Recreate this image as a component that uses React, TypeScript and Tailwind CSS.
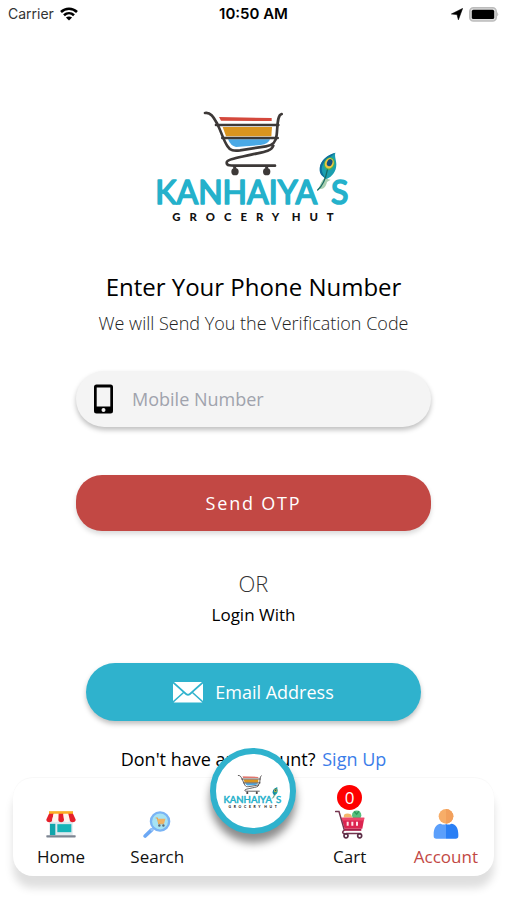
import { useState } from "react";

function Logo({ className }: { className?: string }) {
  return (
    <svg viewBox="0 0 660 390" className={className} role="img" aria-label="Kanhaiya's Grocery Hut">
      {/* Goods in the cart */}
      <path d="M225 51 L383 54 V63 L231 62 Z" fill="#d4483c" />
      <path d="M236 81 L384 81 L382 109 L246 109 Z" fill="#d9941f" />
      <path d="M252 118 L378 118 Q374 132 350 135 L276 141 Q260 138 252 118 Z" fill="#4aa9e6" />
      {/* Frame */}
      <g fill="none" stroke="#3d3938" strokeWidth="8" strokeLinecap="round" strokeLinejoin="round">
        <path d="M183 39 C201 36 209 53 220 72 C232 96 238 120 250 138 C258 152 270 153 288 151 L366 139 C388 136 396 125 398 105 C401 80 399 45 413 42" />
        <path d="M216 75 H403" />
        <path d="M235 114 H401" />
        <path d="M388 137 C382 156 352 157 322 164 C290 172 248 177 248 188 C248 198 262 197 278 197 H393" />
      </g>
      <path d="M272 197 V206 M368 197 V206" stroke="#3d3938" strokeWidth="9" />
      <circle cx="273" cy="215" r="11" fill="#3d3938" />
      <circle cx="368" cy="215" r="11" fill="#3d3938" />
      <g fontFamily="Lato, sans-serif" fontWeight="400" fontSize="96" fill="#24b1cb" stroke="#24b1cb" strokeWidth="5" strokeLinejoin="round">
        <text x="34" y="313">KANHAIYA</text>
        <text x="561" y="313">S</text>
      </g>
      <g fontFamily="Lato, sans-serif" fontWeight="900" fontSize="34" letterSpacing="27" fill="#111">
        <text x="85" y="362">GROCERY</text>
        <text x="443" y="362">HUT</text>
      </g>
      {/* Peacock feather */}
      <path d="M546 232 C530 240 530 258 521 270 L529 267 C540 268 546 258 549 246 L560 239 L552 238 Z" fill="#a9cfb0" />
      <path d="M574 158 C547 166 525 185 528 210 C529 222 536 231 547 237 C566 230 577 214 577 193 C577 179 571 170 574 158 Z" fill="#1b9fb0" />
      <path d="M574 158 C560 173 535 180 533 207 C534 220 540 229 547 237 C536 230 525 223 527 205 C529 181 550 165 574 158 Z" fill="#0e6f9c" />
      <ellipse cx="556" cy="191" rx="16" ry="20" transform="rotate(22 556 191)" fill="#43b05c" />
      <ellipse cx="556" cy="190" rx="13" ry="16" transform="rotate(22 556 190)" fill="#f2c53d" />
      <ellipse cx="557" cy="188" rx="8" ry="11" transform="rotate(22 557 188)" fill="#15517f" />
      <path d="M550 210 C545 237 538 255 521 270" fill="none" stroke="#176a63" strokeWidth="4" strokeLinecap="round" />
    </svg>
  );
}

function StatusBar() {
  return (
    <header className="grid h-7 grid-cols-3 items-center px-2 font-['Inter',sans-serif] text-black">
      <div className="flex items-center gap-1.5 text-sm text-[#333]">
        <span>Carrier</span>
        <svg viewBox="0 0 18 14" className="h-3.5 w-[18px]" fill="none" stroke="#000" strokeWidth="2.6">
          <path d="M1 5 C5.5 0.7 12.5 0.7 17 5" />
          <path d="M4 8.3 C7 5.5 11 5.5 14 8.3" />
          <path d="M9 13.6 L5.9 10.6 C7.7 9 10.3 9 12.1 10.6 Z" fill="#000" stroke="none" />
        </svg>
      </div>
      <span className="text-center text-[15px] font-semibold">10:50 AM</span>
      <div className="flex items-center justify-end gap-1.5">
        <svg viewBox="0 0 12 12" className="size-3">
          <path d="M11.6 0.4 L7.4 11.8 L6 6.6 L0.4 6 Z" fill="#000" stroke="#000" strokeWidth="0.6" strokeLinejoin="round" />
        </svg>
        <svg viewBox="0 0 30 15" className="h-[15px] w-[30px]">
          <rect x="0.8" y="0.8" width="26.4" height="13.2" rx="3.6" fill="#ddd" stroke="#bcbcbc" strokeWidth="1.6" />
          <rect x="2.8" y="2.8" width="22.4" height="9.2" rx="1.6" fill="#000" />
          <path d="M28.2 5 Q30.2 7.3 28.2 9.6 Z" fill="#bcbcbc" />
        </svg>
      </div>
    </header>
  );
}

function PhoneIcon() {
  return (
    <svg viewBox="0 0 20 30" className="h-[30px] w-5 shrink-0">
      <path
        fillRule="evenodd"
        d="M2.5 0.5 H16.5 Q19 0.5 19 3 V27 Q19 29.5 16.5 29.5 H2.5 Q0 29.5 0 27 V3 Q0 0.5 2.5 0.5 Z M2.7 3.5 V22.5 H16.3 V3.5 Z M9.5 24 A2 2 0 1 0 9.5 28 A2 2 0 1 0 9.5 24 Z"
        fill="#000"
      />
    </svg>
  );
}

function EnvelopeIcon() {
  return (
    <svg viewBox="0 0 30 21" className="h-[21px] w-[30px]" fill="#fff">
      <path d="M1 0 H29 L16.4 11.2 Q15 12.3 13.6 11.2 Z" />
      <path d="M0 1.5 L9.8 10.2 L0 19 Z" />
      <path d="M30 1.5 L20.2 10.2 L30 19 Z" />
      <path d="M10.8 11.2 L12.8 12.9 Q15 14.5 17.2 12.9 L19.2 11.2 L29.4 20.6 H0.6 Z" />
    </svg>
  );
}

function ShopIcon() {
  return (
    <svg viewBox="0 0 90 80" className="h-[27px] w-[30px]">
      <rect x="10" y="30" width="70" height="43" fill="#dfe9ee" />
      <rect x="12" y="38" width="16" height="34" fill="#11a5ab" />
      <rect x="34" y="39" width="42" height="24" fill="#17b4b8" />
      <rect x="1" y="72" width="88" height="7" rx="2" fill="#7d8592" />
      <rect x="9" y="0" width="72" height="9" fill="#fbae24" />
      <path d="M9 8 H23 L19 25 A9 8 0 0 1 1 25 Z" fill="#e5202b" />
      <path d="M23 8 H38 L37 25 A9 8 0 0 1 19 25 Z" fill="#fff4ee" />
      <path d="M38 8 H52 L54 25 A8.5 8 0 0 1 37 25 Z" fill="#e5202b" />
      <path d="M52 8 H67 L71 25 A8.5 8 0 0 1 54 25 Z" fill="#fff4ee" />
      <path d="M67 8 H81 L89 25 A9 8 0 0 1 71 25 Z" fill="#e5202b" />
    </svg>
  );
}

function SearchIcon() {
  return (
    <svg viewBox="0 0 82 80" className="h-[27px] w-7">
      <path d="M25 56 L6 74" stroke="#6ca8f4" strokeWidth="11" strokeLinecap="round" />
      <path d="M30 51 L23 58" stroke="#9ac7f8" strokeWidth="7" />
      <circle cx="50" cy="31" r="27" fill="#a6e3f4" stroke="#7ab4f5" strokeWidth="7" />
      <path d="M37 21 H42 L46 38 H61" fill="none" stroke="#e8a04b" strokeWidth="3" />
      <path d="M43 23 H66 L62 37 H46 Z" fill="#f0b264" />
      <circle cx="48" cy="43" r="3.5" fill="#5c6c7c" />
      <circle cx="60" cy="43" r="3.5" fill="#5c6c7c" />
    </svg>
  );
}

function CartIcon() {
  return (
    <svg viewBox="0 0 90 86" className="h-[29px] w-[30px]">
      <path d="M26 22 L27 14 Q36 7 48 13 L52 22 Z" fill="#f4b66a" />
      <circle cx="65" cy="15" r="14" fill="#58c07d" />
      <path d="M58 4 L65 12 L72 3" fill="none" stroke="#2e9a5a" strokeWidth="4" />
      <path d="M19 23 H88 L82 56 H29 Z" fill="#dc2450" />
      <path d="M19 23 H88 L87 31 H21 Z" fill="#ef476b" />
      <path d="M38 35 V47 M52 35 V47 M66 35 V47" stroke="#ffe4ea" strokeWidth="6" />
      <path d="M2 4 H12 L28 60 C18 67 25 72 34 70 H77" fill="none" stroke="#74354f" strokeWidth="4.5" strokeLinecap="round" />
      <path d="M28 59 H79" stroke="#a51f49" strokeWidth="6" />
      <circle cx="33" cy="77" r="6" fill="#fff" stroke="#5c2e47" strokeWidth="5" />
      <circle cx="74" cy="77" r="6" fill="#fff" stroke="#5c2e47" strokeWidth="5" />
    </svg>
  );
}

function AccountIcon() {
  return (
    <svg viewBox="0 0 76 90" className="h-[30px] w-[26px]">
      <path d="M38 45 Q46 49 54 44 C68 45 75 58 75 76 V81 Q75 89 67 89 H38 Z" fill="#2a7ff5" />
      <path d="M38 45 Q30 49 22 44 C8 45 1 58 1 76 V81 Q1 89 9 89 H38 Z" fill="#5b9ffb" />
      <circle cx="38" cy="22" r="22" fill="#f7ad68" />
      <path d="M38 0 A22 22 0 0 1 38 44 Z" fill="#f2a05c" />
    </svg>
  );
}

const tabs = [
  { label: "Home", icon: <ShopIcon /> },
  { label: "Search", icon: <SearchIcon /> },
  null,
  { label: "Cart", icon: <CartIcon />, badge: 0 },
  { label: "Account", icon: <AccountIcon /> },
];

export default function App() {
  const [phone, setPhone] = useState("");
  const active = "Account";

  return (
    <div className="flex min-h-screen flex-col bg-white font-['Open_Sans',sans-serif] text-black">
      <StatusBar />

      <main className="flex flex-col items-center pt-[72px]">
        <Logo className="h-[130px] w-[220px]" />

        <h1 className="mt-[41px] text-2xl leading-8">Enter Your Phone Number</h1>
        <p className="mt-2 text-lg leading-6 font-light text-[#222]">We will Send You the Verification Code</p>

        <form className="mt-9 flex w-full flex-col items-center" onSubmit={(e) => e.preventDefault()}>
          <label className="flex h-14 w-[70%] items-center gap-[18px] rounded-full bg-[#f4f4f4] px-[18px] shadow-[0_3px_5px_rgba(0,0,0,0.25)]">
            <PhoneIcon />
            <input
              type="tel"
              aria-label="Mobile Number"
              value={phone}
              onChange={(e) => setPhone(e.target.value)}
              placeholder="Mobile Number"
              className="w-full bg-transparent text-lg outline-none placeholder:text-[#a0a3ad]"
            />
          </label>
          <button
            type="submit"
            className="mt-12 h-14 w-[70%] rounded-[26px] bg-[#c24844] text-lg tracking-widest text-white shadow-[0_3px_5px_rgba(0,0,0,0.15)]"
          >
            Send OTP
          </button>
        </form>

        <p className="mt-9 text-[22px] leading-8 font-light text-[#333]">OR</p>
        <p className="mt-1 text-[17px] leading-6 font-medium">Login With</p>

        <button
          type="button"
          className="mt-9 flex h-[58px] w-[66%] items-center justify-center gap-3 rounded-full bg-[#2fb2cd] text-lg font-medium text-white shadow-[0_3px_5px_rgba(0,0,0,0.25)]"
        >
          <EnvelopeIcon />
          Email Address
        </button>

        <p className="mt-6 text-lg leading-7 font-medium">
          Don't have an account?{" "}
          <a href="#" className="ml-0.5 text-[#3b7de9]">
            Sign Up
          </a>
        </p>
      </main>

      <nav className="relative mx-[13px] mt-auto mb-6 grid h-[98px] grid-cols-5 rounded-[20px] bg-white shadow-[0_12px_8px_rgba(0,0,0,0.13),0_-1px_1px_rgba(0,0,0,0.03)]">
        {tabs.map((tab) =>
          tab ? (
            <a
              key={tab.label}
              href="#"
              className={`relative flex flex-col items-center pt-[31px] text-[17px] leading-6 ${
                tab.label === active ? "text-[#c24844]" : "text-[#111]"
              }`}
            >
              <span className="flex h-[30px] items-center">{tab.icon}</span>
              <span className="mt-1.5">{tab.label}</span>
              {tab.badge !== undefined && (
                <span className="absolute top-[7px] flex size-[25px] items-center justify-center rounded-full bg-[#fe0000] text-[17px] text-white">
                  {tab.badge}
                </span>
              )}
            </a>
          ) : (
            <div key="logo" className="flex justify-center">
              <button
                type="button"
                aria-label="Shop"
                className="absolute -top-[30px] flex size-[86px] items-center justify-center rounded-full border-[6px] border-[#2fb2cd] bg-white shadow-[0_9px_8px_rgba(0,0,0,0.45)]"
              >
                <Logo className="h-10 w-[66px] shrink-0" />
              </button>
            </div>
          )
        )}
      </nav>
    </div>
  );
}
